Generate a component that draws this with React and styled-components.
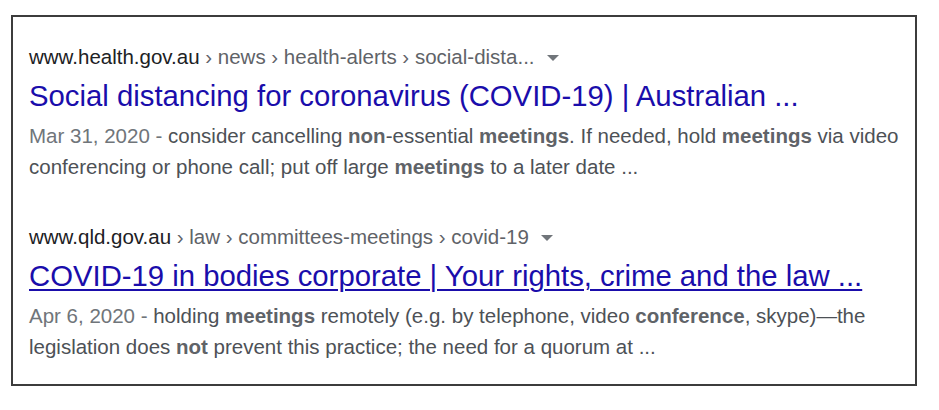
import React from "react";
import styled, { createGlobalStyle } from "styled-components";

const GlobalStyle = createGlobalStyle`
  body {
    margin: 0;
    background: #ffffff;
    font-family: "Liberation Sans", Arial, sans-serif;
  }
`;

const results = [
  {
    domain: "www.health.gov.au",
    crumbs: ["news", "health-alerts", "social-dista..."],
    title: "Social distancing for coronavirus (COVID-19) | Australian ...",
    hovered: false,
    date: "Mar 31, 2020",
    snippet: [
      "consider cancelling ",
      { b: "non" },
      "-essential ",
      { b: "meetings" },
      ". If needed, hold ",
      { b: "meetings" },
      " via video conferencing or phone call; put off large ",
      { b: "meetings" },
      " to a later date ...",
    ],
  },
  {
    domain: "www.qld.gov.au",
    crumbs: ["law", "committees-meetings", "covid-19"],
    title: "COVID-19 in bodies corporate | Your rights, crime and the law ...",
    hovered: true,
    date: "Apr 6, 2020",
    snippet: [
      "holding ",
      { b: "meetings" },
      " remotely (e.g. by telephone, video ",
      { b: "conference" },
      ", skype)\u2014the legislation does ",
      { b: "not" },
      " prevent this practice; the need for a quorum at ...",
    ],
  },
];

function App() {
  return (
    <>
      <GlobalStyle />
      <Page>
        <Frame>
          {results.map((r) => (
            <Result key={r.domain}>
              <Cite>
                <Domain>{r.domain}</Domain>
                {r.crumbs.map((c) => (
                  <Crumb key={c}> › {c}</Crumb>
                ))}
                <Caret />
              </Cite>
              <Title href="#" $hovered={r.hovered}>
                {r.title}
              </Title>
              <Snippet>
                <DateText>{r.date} - </DateText>
                {r.snippet.map((part, i) =>
                  typeof part === "string" ? (
                    <React.Fragment key={i}>{part}</React.Fragment>
                  ) : (
                    <Em key={i}>{part.b}</Em>
                  )
                )}
              </Snippet>
            </Result>
          ))}
        </Frame>
      </Page>
    </>
  );
}

const Page = styled.div`
  padding: 15px 0 0 11px;
`;

const Frame = styled.div`
  width: 906px;
  box-sizing: border-box;
  border: 2px solid #3c3c3c;
  padding: 26px 14px 22px 16px;
  display: flex;
  flex-direction: column;
  gap: 41px;
`;

const Result = styled.div`
  display: flex;
  flex-direction: column;
`;

const Cite = styled.div`
  display: flex;
  align-items: center;
  font-size: 20.5px;
  line-height: 28px;
  white-space: pre;
`;

const Domain = styled.span`
  color: #202124;
`;

const Crumb = styled.span`
  color: #5f6368;
`;

const Caret = styled.span`
  width: 0;
  height: 0;
  margin: 2px 0 0 12px;
  border-left: 6px solid transparent;
  border-right: 6px solid transparent;
  border-top: 6px solid #70757a;
`;

const Title = styled.a`
  margin-top: 7px;
  font-size: 29.3px;
  line-height: 36px;
  color: #1a0dab;
  text-decoration: ${(p) => (p.$hovered ? "underline" : "none")};
  text-decoration-thickness: 2px;
  text-underline-offset: 3px;
  align-self: flex-start;
  white-space: nowrap;
`;

const Snippet = styled.div`
  margin-top: 6px;
  font-size: 20.5px;
  line-height: 31px;
  color: #4d5156;
`;

const DateText = styled.span`
  color: #70757a;
`;

const Em = styled.b`
  color: #5f6368;
  font-weight: bold;
`;

export default App;
